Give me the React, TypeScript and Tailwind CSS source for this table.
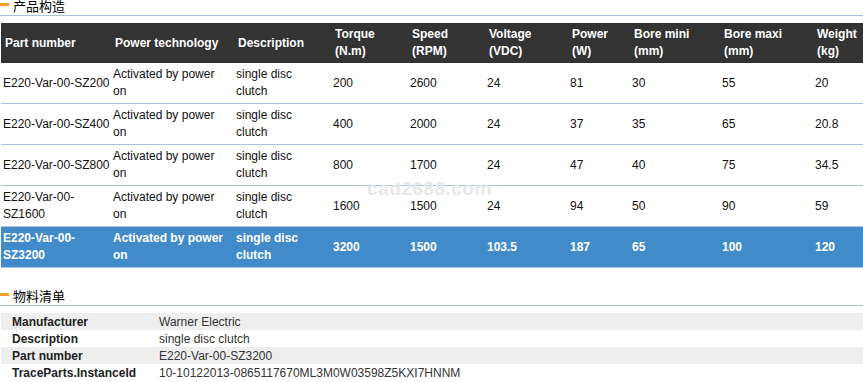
const font = { fontFamily: '"Liberation Sans", Arial, "Noto Sans CJK SC", sans-serif' };

const colWidths = ['w-[110px]', 'w-[123px]', 'w-[97px]', 'w-[77px]', 'w-[77px]', 'w-[83px]', 'w-[62px]', 'w-[90px]', 'w-[93px]', 'w-[50px]'];

const headers = [
  ['Part number'],
  ['Power technology'],
  ['Description'],
  ['Torque', '(N.m)'],
  ['Speed', '(RPM)'],
  ['Voltage', '(VDC)'],
  ['Power', '(W)'],
  ['Bore mini', '(mm)'],
  ['Bore maxi', '(mm)'],
  ['Weight', '(kg)'],
];

const tech = ['Activated by power', 'on'];
const desc = ['single disc', 'clutch'];

const rows = [
  { selected: false, cells: [['E220-Var-00-SZ200'], tech, desc, ['200'], ['2600'], ['24'], ['81'], ['30'], ['55'], ['20']] },
  { selected: false, cells: [['E220-Var-00-SZ400'], tech, desc, ['400'], ['2000'], ['24'], ['37'], ['35'], ['65'], ['20.8']] },
  { selected: false, cells: [['E220-Var-00-SZ800'], tech, desc, ['800'], ['1700'], ['24'], ['47'], ['40'], ['75'], ['34.5']] },
  { selected: false, cells: [['E220-Var-00-', 'SZ1600'], tech, desc, ['1600'], ['1500'], ['24'], ['94'], ['50'], ['90'], ['59']] },
  { selected: true, cells: [['E220-Var-00-', 'SZ3200'], tech, desc, ['3200'], ['1500'], ['103.5'], ['187'], ['65'], ['100'], ['120']] },
];

const bom = [
  ['Manufacturer', 'Warner Electric'],
  ['Description', 'single disc clutch'],
  ['Part number', 'E220-Var-00-SZ3200'],
  ['TraceParts.InstanceId', '10-10122013-0865117670ML3M0W03598Z5KXI7HNNM'],
];

function SectionTitle({ title }: { title: string }) {
  return (
    <div className="flex h-[16px] items-start border-b border-[#a9c2de]">
      <span className="mt-[3px] h-[3px] w-[9px] bg-[#f0a023]" />
      <span className="ml-[4px] text-[13px] leading-[13px] text-black">{title}</span>
    </div>
  );
}

export default function App() {
  return (
    <div className="relative w-[863px] h-[382px] overflow-hidden bg-white" style={font}>
      <SectionTitle title="产品构造" />

      <div className="mt-[7px] pl-[1px]">
        <table className="table-fixed border-separate border-spacing-0 text-[12px] leading-[17px]">
          <thead>
            <tr className="bg-[#333333] text-white">
              {headers.map((h, i) => (
                <th key={i} className={`${colWidths[i]} h-[40px] p-0 pl-[4px] text-left align-middle font-bold whitespace-nowrap`}>
                  {h.map((line, j) => (
                    <div key={j}>{line}</div>
                  ))}
                </th>
              ))}
            </tr>
          </thead>
          <tbody>
            {rows.map((row, r) => (
              <tr key={r} className={row.selected ? 'bg-[#428bca] text-white font-bold' : 'text-[#111]'}>
                {row.cells.map((c, i) => (
                  <td key={i} className="h-[41px] p-0 pl-[2px] align-middle whitespace-nowrap border-b border-[#a9c2de]">
                    {c.map((line, j) => (
                      <div key={j}>{line}</div>
                    ))}
                  </td>
                ))}
              </tr>
            ))}
          </tbody>
        </table>
      </div>

      <div className="mt-[22px]">
        <SectionTitle title="物料清单" />
      </div>

      <div className="mt-[7px] pl-[1px]">
        {bom.map(([label, value], i) => (
          <div
            key={label}
            className={`flex h-[17px] items-center text-[12px] text-[#222] ${i % 2 === 0 ? 'bg-[#eeeeee]' : ''}`}
          >
            <span className="w-[158px] pl-[11px] font-bold">{label}</span>
            <span className="text-[#333]">{value}</span>
          </div>
        ))}
      </div>

      {/* watermark */}
      <div className="pointer-events-none absolute left-[367px] top-[182px] text-[19px] font-bold leading-[14px] tracking-[0.5px] text-[#e8e8e8]">
        cad2688.com
      </div>
    </div>
  );
}
